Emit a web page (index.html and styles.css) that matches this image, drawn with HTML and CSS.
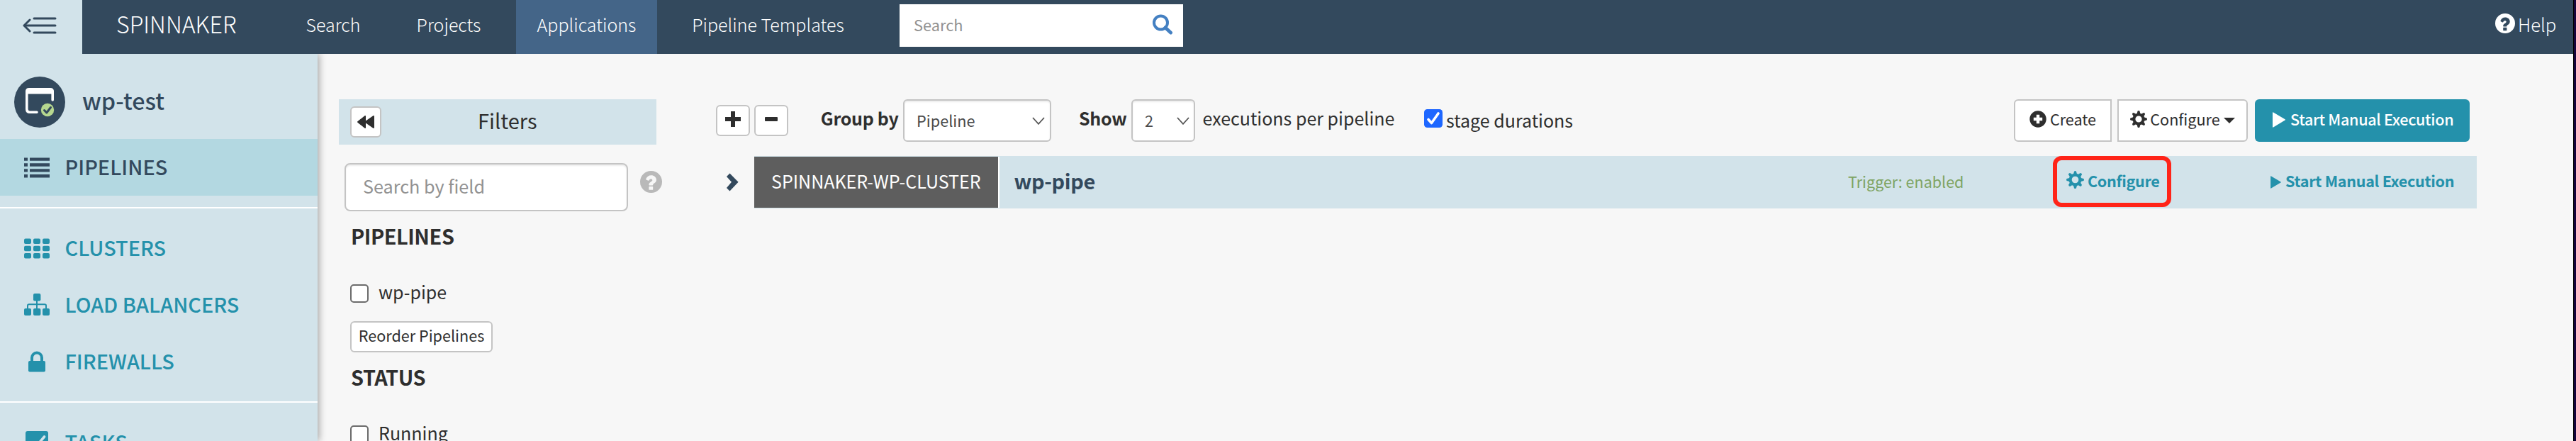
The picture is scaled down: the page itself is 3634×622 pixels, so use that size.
FILE: index.html
```html
<!DOCTYPE html>
<html lang="en">
<head>
<meta charset="utf-8">
<title>wp-test · Pipelines</title>
<link rel="stylesheet" href="styles.css">
</head>
<body>
<svg width="0" height="0" class="defs">
  <symbol id="gear" viewBox="0 0 24 24">
    <circle cx="12" cy="12" r="6.6" fill="none" stroke="currentColor" stroke-width="4"/>
    <g fill="currentColor">
      <path id="tooth" d="M9.6 4.2 10.6.6Q12-.6 13.4.6L14.4 4.2Z"/>
      <use href="#tooth" transform="rotate(45 12 12)"/><use href="#tooth" transform="rotate(90 12 12)"/>
      <use href="#tooth" transform="rotate(135 12 12)"/><use href="#tooth" transform="rotate(180 12 12)"/>
      <use href="#tooth" transform="rotate(225 12 12)"/><use href="#tooth" transform="rotate(270 12 12)"/>
      <use href="#tooth" transform="rotate(315 12 12)"/>
    </g>
  </symbol>
  <symbol id="question" viewBox="0 0 30 30">
    <path fill="currentColor" fill-rule="evenodd" d="M15 0a15 15 0 1 1 0 30a15 15 0 1 1 0-30ZM12.7 21.2a.7.7 0 0 0-.7.7v3.4c0 .4.3.7.7.7h4.2c.4 0 .7-.3.7-.7v-3.4a.7.7 0 0 0-.7-.7ZM15.3 6c-3.6 0-6 1.9-7.3 5-.1.4 0 .8.4 1l2.6 1.3c.4.2.8.1 1-.2.8-1.4 1.6-2 2.8-2 1.2 0 2 .6 2 1.5 0 1-.8 1.5-2.1 2.3-1.6 1-2.7 2.1-2.7 3.800v.4c0 .4.3.7.7.7h4.2c.4 0 .7-.3.7-.7 0-.9.7-1.5 2-2.3 1.5-1 2.6-2.4 2.6-4.5C22.2 8.4 18.8 6 15.3 6Z"/>
  </symbol>
  <symbol id="play" viewBox="0 0 18 22"><path fill="currentColor" d="M0 1Q0 0 1 .5L17.5 10.3Q18.3 11 17.5 11.6L1 21.5Q0 22 0 21Z"/></symbol>
  <symbol id="chevron" viewBox="0 0 18 11"><path fill="none" stroke="#555" stroke-width="1.8" d="M1 1 9 9.8 17 1"/></symbol>
</svg>
<div class="window">
  <header class="topbar">
    <button class="toggle" aria-label="Collapse">
      <svg width="48" height="26" viewBox="0 0 48 26" fill="none" stroke="#33495d" stroke-width="3" stroke-linecap="round"><path d="M16 3h30M3 13h43M16 23h30"/><path d="M10 5 2 13l8 8" stroke-linejoin="round"/></svg>
    </button>
    <div class="brand">SPINNAKER</div>
    <nav class="nav">
      <a class="nav-search">Search</a>
      <a class="nav-projects">Projects</a>
      <a class="nav-apps active">Applications</a>
      <a class="nav-templates">Pipeline Templates</a>
    </nav>
    <div class="search">
      <span>Search</span>
      <svg width="30" height="30" viewBox="0 0 30 30" fill="none" stroke="#4480c2"><circle cx="12.5" cy="12" r="9.5" stroke-width="4"/><path d="M19 19 26.5 26" stroke-width="5" stroke-linecap="round"/></svg>
    </div>
    <div class="help"><svg width="28" height="28"><use href="#question"/></svg><span>Help</span></div>
  </header>
  <div class="content">
    <aside class="sidebar">
      <div class="app">
        <svg width="72" height="72" viewBox="0 0 72 72"><circle cx="36" cy="36" r="36" fill="#33495d"/><path fill="none" stroke="#fff" stroke-width="3.6" stroke-linecap="round" d="M54.2 33V21M17.8 21V46Q17.8 50.2 22 50.2H32"/><path fill="#fff" d="M16 24.5V21Q16 16 21 16H51Q56 16 56 21V24.5Z"/><circle cx="47" cy="47" r="9.2" fill="#b6d78f"/><path fill="none" stroke="#33495d" stroke-width="3" stroke-linecap="round" stroke-linejoin="round" d="M42.5 47.5 45.8 51 51.5 43.5"/></svg>
        <span>wp-test</span>
      </div>
      <a class="item active"><svg width="36" height="30" viewBox="0 0 36 30" fill="currentColor"><path d="M0 1.5h5v4.300H0zM8 1.5h28v4.300H8zM0 9.300h5v4.400H0zM8 9.300h28v4.400H8zM0 17.200h5v4.400H0zM8 17.200h28v4.400H8zM0 25h5v4.500H0zM8 25h28v4.500H8z"/></svg><span>PIPELINES</span></a>
      <hr>
      <a class="item"><svg width="36" height="29" viewBox="0 0 36 29" fill="currentColor"><g id="cells"><rect width="10" height="7.6" y=".5" rx="2"/><rect width="10" height="7.6" x="13" y=".5" rx="2"/><rect width="10" height="7.6" x="26" y=".5" rx="2"/></g><use href="#cells" y="10.2"/><use href="#cells" y="20.4"/></svg><span>CLUSTERS</span></a>
      <a class="item"><svg width="36" height="32" viewBox="0 0 36 32" fill="currentColor"><rect x="13" y="0" width="10.4" height="10.5" rx="2"/><rect y="21" width="10" height="10" rx="2"/><rect x="13" y="21" width="10.4" height="10" rx="2"/><rect x="26" y="21" width="10" height="10" rx="2"/><path fill="none" stroke="currentColor" stroke-width="2" d="M18 10V22M5 22V17Q5 15.2 7 15.2H29Q31 15.2 31 17V22"/></svg><span>LOAD BALANCERS</span></a>
      <a class="item"><svg width="36" height="30" viewBox="0 0 36 30"><rect x="6" y="14" width="24" height="15.5" rx="2" fill="currentColor"/><path fill="none" stroke="currentColor" stroke-width="4" d="M11 15V9.500a7 7 0 0 1 14 0V15"/></svg><span>FIREWALLS</span></a>
      <hr>
      <a class="item"><svg width="36" height="32" viewBox="0 0 36 32"><rect x="2" width="32" height="32" rx="3" fill="currentColor"/><path fill="none" stroke="#d2e3ea" stroke-width="3.6" stroke-linecap="round" d="M9 18 15 24 28.5 8"/></svg><span>TASKS</span></a>
    </aside>
    <section class="filters">
      <div class="filters-head">
        <button class="btn square"><svg width="24" height="18" viewBox="0 0 24 18"><path fill="#2e2e2e" d="M.4 8.3 10.5.3Q12-.4 12 1V7.6L22 .4Q24-.6 24 1V17Q24 18.6 22 17.6L12 10.4V17Q12 18.4 10.5 17.7L.4 9.7Q-.2 9 .4 8.3Z"/></svg></button>
        <span>Filters</span>
      </div>
      <div class="field-row"><div class="field"><span>Search by field</span></div><svg class="hint" width="31" height="31"><use href="#question"/></svg></div>
      <h4>PIPELINES</h4>
      <label class="check"><input type="checkbox"><span>wp-pipe</span></label>
      <button class="btn reorder"><span>Reorder Pipelines</span></button>
      <h4>STATUS</h4>
      <label class="check"><input type="checkbox"><span>Running</span></label>
    </section>
    <main class="main">
      <div class="toolbar">
        <button class="btn pm"><svg width="22" height="22" viewBox="0 0 22 22"><path fill="none" stroke="#2e2e2e" stroke-width="6" d="M11 0V22M0 11H22"/></svg></button>
        <button class="btn pm minus"><svg width="18" height="22" viewBox="0 0 18 22"><rect y="8" width="18" height="6" rx="1" fill="#2e2e2e"/></svg></button>
        <b class="group-by">Group by</b>
        <div class="select by"><span>Pipeline</span><svg width="18" height="11"><use href="#chevron"/></svg></div>
        <b class="show">Show</b>
        <div class="select count"><span>2</span><svg width="18" height="11"><use href="#chevron"/></svg></div>
        <span class="per">executions per pipeline</span>
        <label class="stages"><svg width="26" height="26" viewBox="0 0 26 26"><rect width="26" height="26" rx="4.5" fill="#1e67ff"/><path fill="none" stroke="#fff" stroke-width="3.6" stroke-linecap="round" stroke-linejoin="round" d="M6 14.5 10.500 19.5 20 6"/></svg><span>stage durations</span></label>
        <div class="actions">
          <button class="btn create"><svg width="24" height="24" viewBox="0 0 24 24"><circle cx="12" cy="12" r="11.7" fill="#2e2e2e"/><path d="M12 5.8V18.2M5.8 12H18.2" stroke="#fff" stroke-width="4.4"/></svg><span>Create</span></button>
          <button class="btn config"><svg width="24" height="24"><use href="#gear"/></svg><span>Configure</span><i class="caret"></i></button>
          <button class="start"><svg width="18" height="22"><use href="#play"/></svg><span>Start Manual Execution</span></button>
        </div>
      </div>
      <div class="group">
        <svg class="expand" width="18" height="26" viewBox="0 0 18 26"><path fill="#33495d" d="M1 5 5.5.4 17.6 12.8 5.5 25.6 1 21 8 12.8Z"/></svg>
        <div class="row">
          <div class="tag">SPINNAKER-WP-CLUSTER</div>
          <div class="name">wp-pipe</div>
          <div class="trigger">Trigger: enabled</div>
          <a class="row-config"><svg width="25" height="25"><use href="#gear"/></svg><span>Configure</span></a>
          <a class="row-start"><svg width="15" height="18"><use href="#play"/></svg><span>Start Manual Execution</span></a>
        </div>
      </div>
    </main>
  </div>
</div>
</body>
</html>
```
FILE: styles.css
```css
* { box-sizing: border-box; }
body {
  margin: 0;
  height: 622px;
  overflow: hidden;
  background: #14033a;
  font-family: "Noto Sans CJK SC", "Open Sans", sans-serif;
  font-size: 25px;
  line-height: 40px;
  color: #2e2e2e;
}
.defs { position: absolute; }
svg { display: block; flex: none; }
span, b, a, h4, div { white-space: nowrap; }
button { font: inherit; color: inherit; padding: 0; border: 0; }
.window { width: 3631px; height: 622px; overflow: hidden; background: #f7f7f7; border-right: 1px solid #000; }

/* top bar */
.topbar { display: flex; height: 76px; background: #33495d; color: #fff; font-weight: 300; }
.toggle { width: 116px; background: #d2e3ea; padding: 0 0 4px 32px; }
.brand { width: 286px; padding-left: 48px; font-size: 32.2px; line-height: 66px; }
.nav { display: flex; line-height: 68px; text-align: center; }
.nav-search { width: 136px; }
.nav-projects { width: 150px; margin: 0 20px; }
.nav-apps { width: 199px; margin-right: 20px; }
.nav-apps.active { background: #446588; }
.nav-templates { width: 273px; }
.search { display: flex; justify-content: space-between; align-items: center; width: 400px; height: 60px; margin: 6px 0 0 49px; padding: 0 14px 3px 20px; background: #fff; color: #929292; font-size: 21.8px; font-weight: 400; }
.help { display: flex; margin-left: auto; width: 110px; gap: 4px; line-height: 68px; font-size: 25.6px; }
.help svg { margin-top: 19px; }

.content { display: flex; height: 546px; }

/* sidebar */
.sidebar { width: 448px; flex: none; background: #d2e3ea; box-shadow: 2px 0 10px rgba(0,0,0,.35); clip-path: inset(0 -20px 0 0); color: #2491ab; font-size: 28.9px; font-weight: 500; }
.app { display: flex; align-items: center; height: 120px; padding: 16px 0 0 20px; gap: 24px; color: #33495d; font-size: 32.3px; }
.app span { padding-bottom: 6px; }
.item { display: flex; align-items: center; height: 80px; padding-left: 34px; gap: 21.5px; }
.item span { padding-bottom: 5px; }
.item.active { background: #b3d8e1; color: #33495d; }
hr { height: 2px; border: 0; margin: 16px 0; background: #fff; }

/* filters */
.filters { width: 532px; flex: none; padding: 64px 0 0 30px; }
.filters-head { display: flex; align-items: center; width: 448px; height: 64px; padding-left: 16px; background: #d2e3ea; font-size: 29px; }
.filters-head span { padding: 0 0 7px 136px; }
.btn { display: flex; align-items: center; justify-content: center; background: #fff; border: 2px solid #c4c4c4; border-radius: 6px; font-size: 21.6px; }
.square { width: 44px; height: 44px; }
.field-row { display: flex; margin: 26px 0 0 8px; }
.field { display: flex; align-items: center; width: 400px; height: 68px; border: 2px solid #c4c4c4; border-radius: 8px; background: #fff; padding: 0 0 4px 24px; box-shadow: inset 0 2px 2px rgba(0,0,0,.08); color: #929292; font-size: 25.2px; }
.hint { margin: 11px 0 0 17px; color: #b9b9b9; }
h4 { margin: 14px 0 0 17px; font-size: 28.9px; line-height: 40px; font-weight: 700; letter-spacing: -.45px; }
.check { display: flex; align-items: center; height: 44px; margin: 40px 0 0 16px; gap: 14px; }
.check input { appearance: none; width: 26px; height: 26px; margin: 0; border: 2px solid #6b6b6b; border-radius: 5px; background: #fff; }
.check span { padding-bottom: 6px; }
.reorder { width: 201px; height: 44px; margin: 17px 0 0 16px; }
.reorder span { padding-bottom: 5px; }

/* executions */
.main { width: 2514px; flex: none; padding: 64px 0 0 30px; }
.toolbar { display: flex; align-items: center; height: 60px; }
.pm { width: 48px; height: 44px; padding-bottom: 4px; }
.minus { margin-left: 6px; }
.toolbar b { font-weight: 700; letter-spacing: -.3px; padding-bottom: 8px; }
.group-by { width: 162px; padding-left: 45.8px; }
.select { display: flex; align-items: center; justify-content: space-between; height: 60px; border: 2px solid #c4c4c4; border-radius: 6px; background: #fff; color: #4a4a4a; font-size: 21.7px; box-shadow: inset 0 2px 2px rgba(0,0,0,.08); }
.by { width: 209px; padding: 0 7px 0 17px; }
.show { width: 113px; padding-left: 39px; }
.count { width: 90px; padding: 0 6px 0 17px; }
.per { width: 323px; padding: 0 0 8px 10.5px; }
.stages { display: flex; align-items: center; gap: 5px; height: 60px; }
.stages svg { margin-bottom: 6px; }
.stages span { padding-bottom: 2px; }
.actions { display: flex; margin-left: auto; margin-right: 10px; }
.actions button { height: 60px; padding-bottom: 5px; }
.actions .create { width: 138px; border-radius: 6px 0 0 6px; gap: 5px; }
.actions .config { width: 184px; margin: 0 10px 0 8px; border-radius: 0 6px 6px 0; gap: 4px; }
.caret { border: 8px solid transparent; border-top-color: #2e2e2e; border-bottom: 0; margin: 5px 0 0 1px; }
.start { display: flex; align-items: center; width: 303px; padding-left: 25px; gap: 7px; background: #2491ab; color: #fff; border-radius: 6px; font-size: 21.6px; font-weight: 500; letter-spacing: -.32px; }
.start svg { margin-top: 2px; }
.group { display: flex; align-items: center; margin-top: 20px; }
.expand { margin: 0 22px 0 14px; }
.row { display: flex; align-items: center; width: 2430px; height: 74px; background: #d2e3ea; }
.tag { display: flex; align-items: center; width: 346px; height: 72px; padding: 0 0 4px 24px; background: #5e5e5e; color: #fff; border-right: 2px solid #fff; }
.name { width: 1197px; padding: 0 0 7px 20.5px; color: #33495d; font-size: 28.9px; font-weight: 700; letter-spacing: -.4px; }
.trigger { width: 289px; padding-bottom: 3px; font-size: 21.5px; color: #7ea463; }
.row-config, .row-start { display: flex; align-items: center; color: #2491ab; font-size: 21.6px; font-weight: 700; letter-spacing: -.32px; }
.row-config { width: 167px; height: 72px; margin-top: -3px; padding-left: 13px; gap: 5px; border: 6px solid #ff2418; border-radius: 12px; }
.row-config svg { margin-bottom: 5px; }
.row-config span { padding-bottom: 1px; }
.row-start { margin-left: 140px; gap: 6px; }
.row-start span { padding-bottom: 5px; }
```
